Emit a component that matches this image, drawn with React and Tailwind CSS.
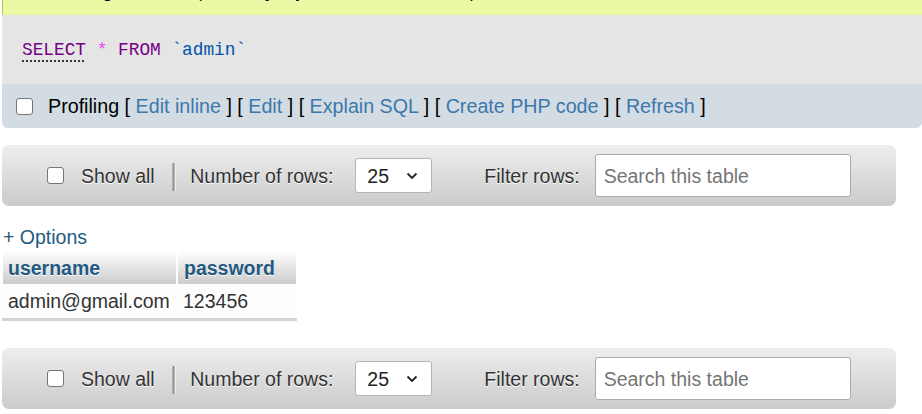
import React from 'react'

const FONT = { fontFamily: '"Liberation Sans", Arial, sans-serif' }

const Box = () => (
  <span className="inline-block w-[17px] h-[17px] rounded-[3px] border-[1.5px] border-[#767676] bg-white shrink-0" />
)

const Chevron = () => (
  <svg width="12" height="8" viewBox="0 0 12 8" className="shrink-0">
    <path d="M1.5 1.5l4.5 4.5 4.5-4.5" fill="none" stroke="#222" strokeWidth="1.8" />
  </svg>
)

const Navigation = () => (
  <div className="flex items-center w-[894px] h-[61px] rounded-[7px] bg-gradient-to-b from-[#eeeeee] to-[#cbcbcb] text-[#333] [text-shadow:0_1px_0_#fff]">
    <div className="ml-[45px] flex items-center">
      <Box />
      <span className="ml-[17px]">Show all</span>
    </div>
    <span className="ml-[15px] text-[29px] leading-none text-[#999] [text-shadow:1px_0_0_#fff]">|</span>
    <span className="ml-[13px]">Number of rows:</span>
    <div className="ml-[22px] flex items-center justify-between w-[77px] h-[35px] bg-white border border-[#b5b5b5] rounded-[3px] pl-[11px] pr-[13px] [text-shadow:none] text-[#222]">
      <span>25</span>
      <Chevron />
    </div>
    <span className="ml-[52px]">Filter rows:</span>
    <div className="ml-[15px] flex items-center w-[256px] h-[43px] bg-white border border-[#aaa] rounded-[3px] pl-[8px] [text-shadow:none] text-[#757575]">
      Search this table
    </div>
  </div>
)

const Link = ({ children }) => <span className="text-[#3b78ad]">{children}</span>

export default function App() {
  return (
    <div className="min-h-screen bg-white overflow-hidden text-[19.5px] leading-[22px]" style={FONT}>
      <div className="pl-[2px]">
        {/* success message, mostly scrolled out of view */}
        <div className="-mt-[35px] h-[50px] flex items-end pb-[11px] bg-[#ebf8a4] border-l border-[#a2d246] text-black text-[17px] leading-[22px]">
          <span className="ml-[20px] mr-[8px] mb-[5px] inline-flex w-[16px] h-[16px] rounded-full bg-[#5ba834] items-center justify-center text-white text-[11px] leading-none">✓</span>
          <span>Showing rows 0 - 0 (1 total, Query took 0.0004 seconds.)</span>
        </div>

        <div className="h-[69px] flex items-center bg-[#e5e5e5] pl-[20px] text-[17.8px]" style={{ fontFamily: '"Liberation Mono", "DejaVu Sans Mono", monospace' }}>
          <span className="text-[#770088] underline decoration-dotted decoration-[#222] underline-offset-[6px]">SELECT</span>
          <span className="whitespace-pre text-[#ee44ee]"> * </span>
          <span className="text-[#770088]">FROM</span>
          <span className="whitespace-pre text-[#0055aa]"> `admin`</span>
        </div>

        <div className="h-[44px] flex items-center bg-[#d3dce3] rounded-b-[6px] pl-[14px] text-black whitespace-pre text-[19.7px]">
          <Box />
          <span className="ml-[15px]">
            Profiling [ <Link>Edit inline</Link> ] [ <Link>Edit</Link> ] [ <Link>Explain SQL</Link> ] [ <Link>Create PHP code</Link> ] [ <Link>Refresh</Link> ]
          </span>
        </div>

        <div className="mt-[17px]">
          <Navigation />
        </div>

        <div className="mt-[20px] pl-[1px] text-[#235a81]">+ Options</div>

        <div className="mt-[3px] ml-[1px] w-[294px]">
          <div className="flex gap-[2px] font-bold text-[#235a81] [text-shadow:0_1px_0_#fff]">
            <div className="w-[173px] h-[33px] flex items-center pl-[5px] bg-gradient-to-b from-white to-[#cccccc]">username</div>
            <div className="w-[118px] h-[33px] flex items-center pl-[6px] bg-gradient-to-b from-white to-[#cccccc]">password</div>
          </div>
          <div className="flex h-[37px] items-center text-[#333] bg-[#fdfdfd] border-b-[3px] border-[#d4d4d4] -ml-[1px] w-[295px]">
            <div className="w-[176px] pl-[6px]">admin@gmail.com</div>
            <div className="pl-[5px]">123456</div>
          </div>
        </div>

        <div className="mt-[27px]">
          <Navigation />
        </div>
      </div>
    </div>
  )
}
